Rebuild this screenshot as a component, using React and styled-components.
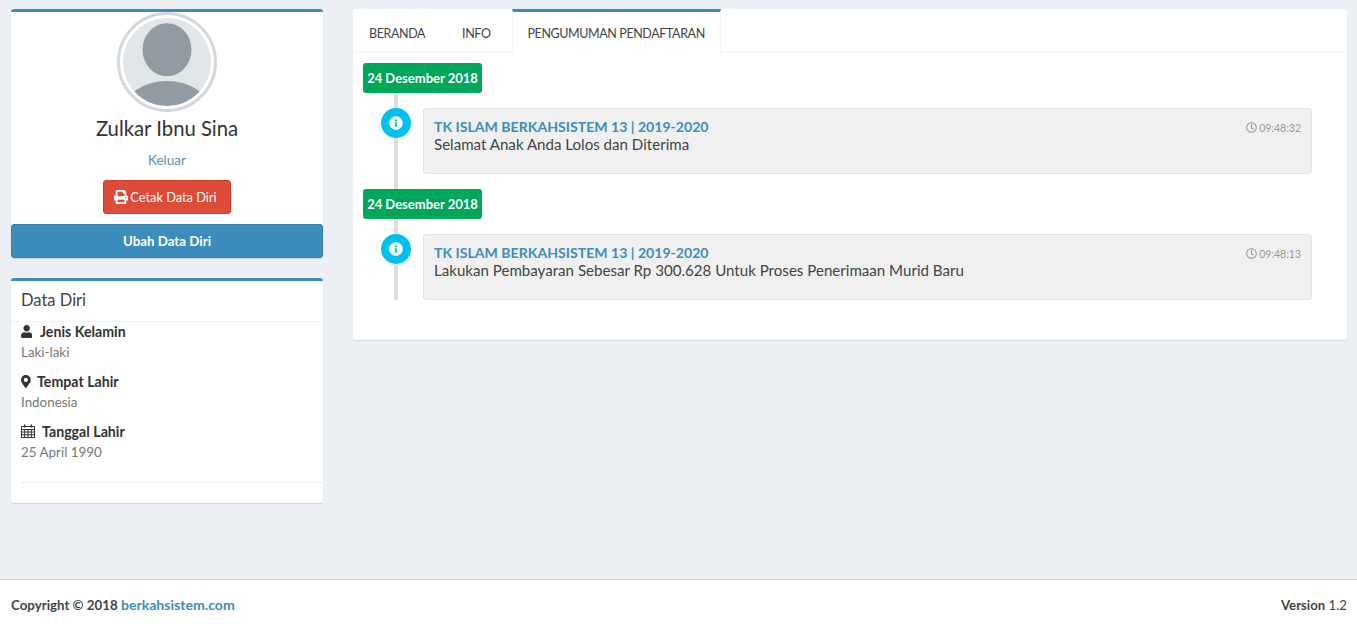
import React from 'react';
import styled, { createGlobalStyle } from 'styled-components';
import { FaPrint, FaUser, FaMapMarkerAlt, FaInfoCircle, FaRegClock } from 'react-icons/fa';

const Global = createGlobalStyle`
  * { box-sizing: border-box; }
  html, body { margin: 0; padding: 0; }
  body {
    background: #ecf0f5;
    font-family: "Lato", "Noto Sans", sans-serif;
    font-size: 14px;
    color: #333;
  }
`;

const Page = styled.div`
  min-height: 624px;
  display: flex;
  flex-direction: column;
`;

const Content = styled.div`
  flex: 1;
  display: grid;
  grid-template-columns: 312px 994px;
  column-gap: 30px;
  align-items: start;
  padding: 9px 10px 0 11px;
`;

const Sidebar = styled.div`
  display: flex;
  flex-direction: column;
  gap: 20px;
`;

const Box = styled.div`
  background: #fff;
  border-top: 3px solid #3c8dbc;
  border-radius: 3px;
  box-shadow: 0 1px 1px rgba(0, 0, 0, 0.1);
`;

const ProfileBox = styled(Box)`
  display: flex;
  flex-direction: column;
  align-items: center;
  height: 249px;
`;

const Avatar = styled.svg`
  width: 100px;
  height: 100px;
  display: block;
`;

const Name = styled.h3`
  margin: 5px 0 0;
  font-size: 20.3px;
  line-height: 22px;
  font-weight: 400;
  color: #333;
`;

const Logout = styled.a`
  margin-top: 12px;
  font-size: 13.5px;
  line-height: 18px;
  color: #5f8fb4;
`;

const PrintButton = styled.button`
  margin-top: 11px;
  width: 128px;
  height: 34px;
  display: flex;
  align-items: center;
  justify-content: center;
  gap: 2px;
  padding: 0 3px 0 0;
  background: #dd4b39;
  border: 1px solid #d73925;
  border-radius: 3px;
  color: #fff;
  font: inherit;
  font-size: 12.8px;
  svg { font-size: 14px; }
`;

const EditButton = styled.button`
  margin-top: 10px;
  width: 100%;
  height: 34px;
  background: #3c8dbc;
  border: 1px solid #367fa9;
  border-radius: 3px;
  color: #fff;
  font: inherit;
  font-size: 13.3px;
  font-weight: 700;
`;

const BoxTitle = styled.h3`
  margin: 0;
  height: 41px;
  padding: 0 10px;
  font-size: 16.5px;
  line-height: 38px;
  font-weight: 400;
  color: #444;
  border-bottom: 1px solid #f4f4f4;
`;

const BoxBody = styled.div`
  padding: 0 0 20px 10px;
`;

const Field = styled.div`
  height: 50px;
`;

const FieldLabel = styled.div`
  display: flex;
  align-items: center;
  gap: ${p => p.$gap}px;
  height: 18px;
  margin-bottom: 2px;
  font-size: 14.2px;
  font-weight: 700;
  color: #333;
  svg { width: ${p => p.$w}px; height: ${p => p.$h}px; flex: none; }
`;

const FieldValue = styled.div`
  height: 20px;
  line-height: 20px;
  font-size: 13.4px;
  color: #777;
`;

const Rule = styled.hr`
  margin: 10px 0 0;
  border: 0;
  border-top: 1px solid #eee;
`;

const TabsBox = styled.div`
  background: #fff;
  border-radius: 3px;
  box-shadow: 0 1px 1px rgba(0, 0, 0, 0.1);
  height: 331px;
`;

const TabBar = styled.div`
  display: flex;
  height: 44px;
  border-bottom: 1px solid #f4f4f4;
`;

const Tab = styled.a`
  height: 43px;
  padding: 3px ${p => p.$pad}px 0;
  line-height: 44px;
  font-size: 12.5px;
  letter-spacing: -0.4px;
  color: #444;
  text-transform: uppercase;
  white-space: nowrap;
`;

const ActiveTab = styled(Tab)`
  height: 44px;
  width: 209px;
  padding: 0 15px;
  line-height: 44px;
  background: #fff;
  border-top: 3px solid #3c8dbc;
  border-left: 1px solid #f4f4f4;
  border-right: 1px solid #f4f4f4;
`;

const Timeline = styled.ul`
  position: relative;
  list-style: none;
  margin: 0;
  padding: 10px 0 0 10px;
  &::before {
    content: '';
    position: absolute;
    left: 41px;
    top: 20px;
    width: 4px;
    height: 227px;
    background: #ddd;
  }
`;

const DateLabel = styled.li`
  position: relative;
  margin-bottom: 15px;
  span {
    display: block;
    width: 119px;
    height: 30px;
    line-height: 31px;
    text-align: center;
    background: #00a65a;
    border-radius: 3px;
    color: #fff;
    font-size: 13px;
    font-weight: 700;
  }
`;

const Item = styled.li`
  position: relative;
  margin: 0 35px 15px 60px;
  height: 66px;
  padding: 9px 10px;
  background: #f0f0f0;
  border: 1px solid #e3e3e3;
  border-radius: 3px;
`;

const ItemIcon = styled.i`
  position: absolute;
  left: -43px;
  top: -1px;
  width: 30px;
  height: 30px;
  display: flex;
  align-items: center;
  justify-content: center;
  border-radius: 50%;
  background: #00c0ef;
  color: #fff;
  font-size: 14px;
`;

const ItemHead = styled.div`
  display: flex;
  justify-content: space-between;
  align-items: center;
  height: 17px;
`;

const ItemTitle = styled.a`
  font-size: 14.1px;
  font-weight: 700;
  color: #3c8dbc;
`;

const ItemTime = styled.span`
  display: flex;
  align-items: center;
  gap: 2px;
  margin-top: 2px;
  font-size: 10.5px;
  color: #999;
  svg { font-size: 11px; }
`;

const ItemText = styled.div`
  font-size: 15.1px;
  line-height: 18px;
  color: #444;
`;

const Footer = styled.footer`
  height: 45px;
  display: flex;
  justify-content: space-between;
  align-items: center;
  padding: 6px 10px 0 11px;
  background: #fff;
  border-top: 1px solid #d2d6de;
  font-size: 13.2px;
  color: #444;
  b { font-weight: 700; }
`;

const Copyright = styled.span`
  margin-top: -2px;
  font-size: 13.3px;
  a { color: #3c8dbc; font-weight: 700; font-size: 14.1px; }
`;

const CalendarIcon = () => (
  <svg viewBox="0 0 14 14" fill="none" stroke="currentColor" strokeWidth="1">
    <rect x="0.5" y="2.5" width="13" height="11" />
    <path d="M0.5 5.5H13.5M0.5 8H13.5M0.5 10.8H13.5M3.7 5.5V13.5M7 5.5V13.5M10.3 5.5V13.5" />
    <path d="M3.7 0.5V3.5M10.3 0.5V3.5" strokeWidth="1.6" />
  </svg>
);

const news = [
  { time: '09:48:32', text: 'Selamat Anak Anda Lolos dan Diterima' },
  { time: '09:48:13', text: 'Lakukan Pembayaran Sebesar Rp 300.628 Untuk Proses Penerimaan Murid Baru' },
];

const fields = [
  { icon: <FaUser />, w: 11.4, h: 13, gap: 7.6, label: 'Jenis Kelamin', value: 'Laki-laki' },
  { icon: <FaMapMarkerAlt />, w: 9.75, h: 13, gap: 6.25, label: 'Tempat Lahir', value: 'Indonesia' },
  { icon: <CalendarIcon />, w: 14, h: 14, gap: 7, label: 'Tanggal Lahir', value: '25 April 1990' },
];

const App = () => (
  <Page>
    <Global />
    <Content>
      <Sidebar>
        <ProfileBox>
          <Avatar viewBox="0 0 100 100">
            <defs>
              <clipPath id="face"><circle cx="50" cy="50" r="44" /></clipPath>
            </defs>
            <circle cx="50" cy="50" r="48.5" fill="#fff" stroke="#d2d6de" strokeWidth="3" />
            <circle cx="50" cy="50" r="44" fill="#e1e6e9" />
            <g clipPath="url(#face)" fill="#929aa3">
              <ellipse cx="50" cy="37.7" rx="24.5" ry="26.5" />
              <ellipse cx="50" cy="99" rx="43" ry="30" />
            </g>
          </Avatar>
          <Name>Zulkar Ibnu Sina</Name>
          <Logout>Keluar</Logout>
          <PrintButton><FaPrint /> Cetak Data Diri</PrintButton>
          <EditButton>Ubah Data Diri</EditButton>
        </ProfileBox>
        <Box>
          <BoxTitle>Data Diri</BoxTitle>
          <BoxBody>
            {fields.map(f => (
              <Field key={f.label}>
                <FieldLabel $gap={f.gap} $w={f.w} $h={f.h}>{f.icon}{f.label}</FieldLabel>
                <FieldValue>{f.value}</FieldValue>
              </Field>
            ))}
            <Rule />
          </BoxBody>
        </Box>
      </Sidebar>
      <TabsBox>
        <TabBar>
          <Tab $pad={16}>Beranda</Tab>
          <Tab $pad={21}>Info</Tab>
          <ActiveTab>Pengumuman Pendaftaran</ActiveTab>
        </TabBar>
        <Timeline>
          {news.map(n => (
            <React.Fragment key={n.time}>
              <DateLabel><span>24 Desember 2018</span></DateLabel>
              <Item>
                <ItemIcon><FaInfoCircle /></ItemIcon>
                <ItemHead>
                  <ItemTitle>TK ISLAM BERKAHSISTEM 13 | 2019-2020</ItemTitle>
                  <ItemTime><FaRegClock />{n.time}</ItemTime>
                </ItemHead>
                <ItemText>{n.text}</ItemText>
              </Item>
            </React.Fragment>
          ))}
        </Timeline>
      </TabsBox>
    </Content>
    <Footer>
      <Copyright><b>Copyright © 2018 </b><a>berkahsistem.com</a></Copyright>
      <span><b>Version</b> 1.2</span>
    </Footer>
  </Page>
);

export default App;
